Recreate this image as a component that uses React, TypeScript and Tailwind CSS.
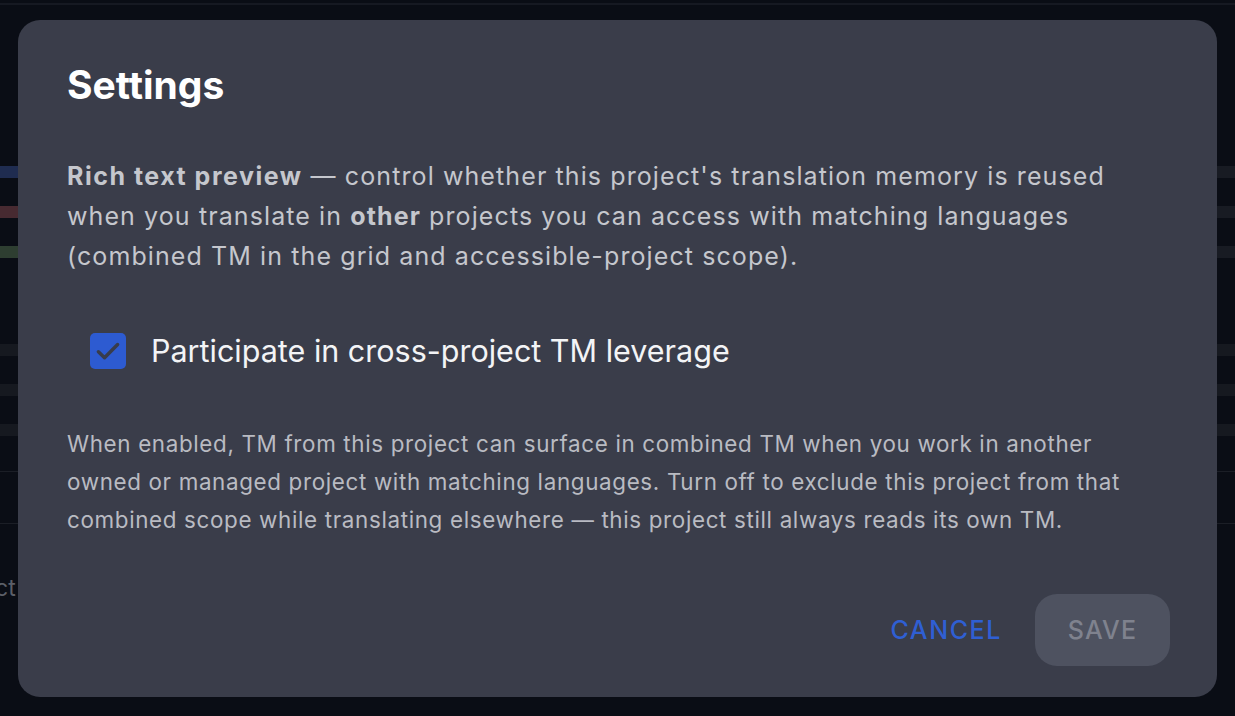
import React from "react";

export default function App() {
  return (
    <div
      className="relative h-[716px] w-[1235px] overflow-hidden bg-[#0a0d15]"
      style={{ fontFamily: "Inter, 'Noto Sans', sans-serif" }}
    >
      {/* obscured app behind the dialog */}
      <div className="flex h-full w-full flex-col">
        <div className="mt-[3px] h-[2px] w-full bg-[#161922]" />
        <div className="mt-[161px] flex h-[12px] w-full justify-between">
          <div className="h-full w-[18px] bg-[#1f2c50]" />
          <div className="h-full w-[18px] bg-[#181b23]" />
        </div>
        <div className="mt-[28px] flex h-[12px] w-full justify-between">
          <div className="h-full w-[18px] bg-[#472a31]" />
          <div className="h-full w-[18px] bg-[#181b23]" />
        </div>
        <div className="mt-[28px] flex h-[12px] w-full justify-between">
          <div className="h-full w-[18px] bg-[#2e3e31]" />
          <div className="h-full w-[18px] bg-[#181b23]" />
        </div>
        <div className="mt-[86px] h-[12px] w-full bg-[#161920]" />
        <div className="mt-[28px] h-[12px] w-full bg-[#161920]" />
        <div className="mt-[28px] h-[12px] w-full bg-[#161920]" />
        <div className="mt-[35px] h-[1px] w-full bg-[#1b1e26]" />
        <div className="mt-[51px] h-[1px] w-full bg-[#1b1e26]" />
        <div className="mt-[50px] -ml-[5px] text-[23px] leading-[28px] text-[#5c5f68]">ct</div>
      </div>

      {/* dialog */}
      <div className="absolute inset-0 flex items-center justify-center">
        <div className="flex h-[677px] w-[1199px] flex-col rounded-[22px] bg-[#3a3d4a] pl-[49px] pr-[47px] pt-[41px] pb-[31px]">
          <h2 className="text-[39px] font-bold leading-[48px] text-white">Settings</h2>

          <p className="mt-[47px] whitespace-nowrap text-[25px] leading-[40px] tracking-[1.1px] text-[#c5c7cd]">
            <span className="font-bold tracking-[1.5px]">Rich text preview</span> — control whether this project's
            translation memory is reused
            <br />
            when you translate in <span className="font-bold">other</span> projects you can access with matching
            languages
            <br />
            (combined TM in the grid and accessible-project scope).
          </p>

          <label className="mt-[55px] ml-[23px] flex h-[40px] items-center gap-[25px]">
            <span className="flex h-[36px] w-[36px] items-center justify-center rounded-[5px] bg-[#2d5bd1]">
              <svg width="32" height="32" viewBox="0 0 24 24" fill="none">
                <path
                  d="M4.8 12.6 L9.4 17 L19.2 7.2"
                  stroke="#383c4b"
                  strokeWidth="2.6"
                  strokeLinecap="round"
                  strokeLinejoin="round"
                />
              </svg>
            </span>
            <span className="text-[30.5px] leading-[40px] text-[#f3f4f6]">Participate in cross-project TM leverage</span>
          </label>

          <p className="mt-[54px] whitespace-nowrap text-[22.4px] leading-[38px] tracking-[0.65px] text-[#b9bbc2]">
            When enabled, TM from this project can surface in combined TM when you work in another
            <br />
            owned or managed project with matching languages. Turn off to exclude this project from that
            <br />
            combined scope while translating elsewhere — this project still always reads its own TM.
          </p>

          <div className="mt-auto flex items-center justify-end gap-[17px]">
            <button className="h-[72px] px-[16px] pt-[3px] text-[25px] font-medium uppercase tracking-[1.6px] text-[#2f5fd3]">
              Cancel
            </button>
            <button className="h-[72px] w-[135px] rounded-[22px] bg-[#4e5260] pt-[3px] text-[25px] font-medium uppercase tracking-[1.2px] text-[#7f828e]">
              Save
            </button>
          </div>
        </div>
      </div>
    </div>
  );
}
